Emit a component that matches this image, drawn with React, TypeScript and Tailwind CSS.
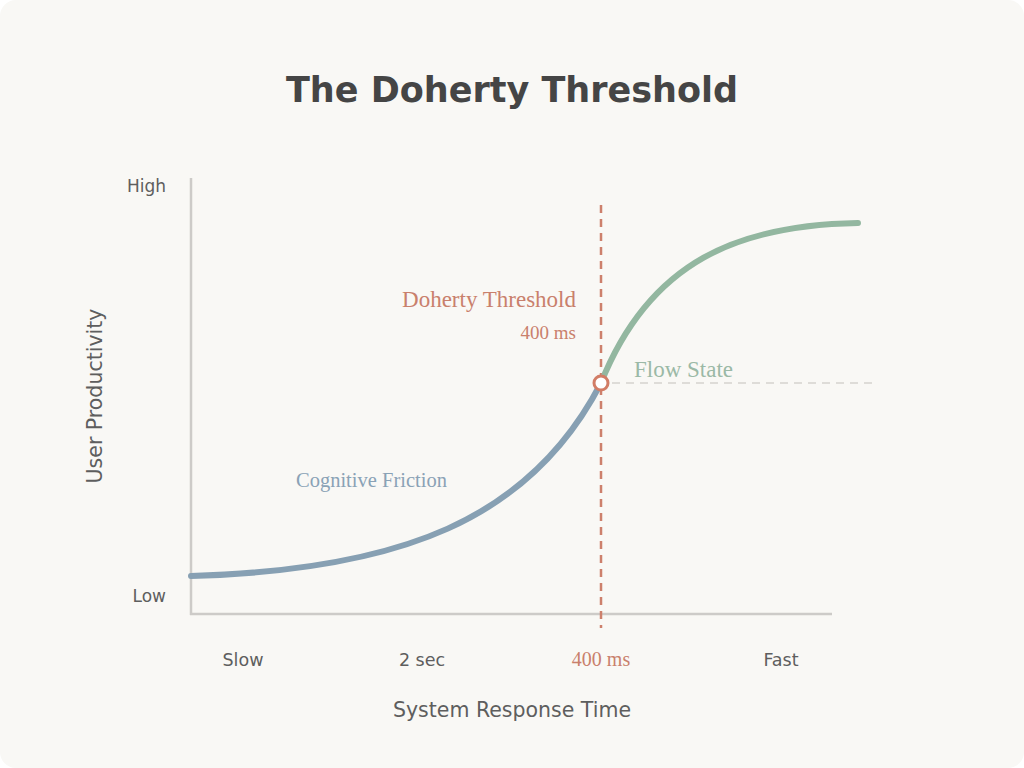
const sans = "'DejaVu Sans', 'Liberation Sans', sans-serif";
const serif = "'Liberation Serif', 'Times New Roman', serif";

function Chart() {
    return (
        <svg className="block" width="1024" height="656" viewBox="0 112 1024 656">
            {/* axes */}
            <line x1="191" y1="178" x2="191" y2="615" stroke="#cdcbc8" strokeWidth="2.5" />
            <line x1="190" y1="614" x2="832" y2="614" stroke="#cdcbc8" strokeWidth="2.5" />

            {/* threshold guides */}
            <line x1="601" y1="205" x2="601" y2="628" stroke="#cd806c" strokeWidth="2.5" strokeDasharray="8 6" />
            <line x1="612" y1="383" x2="874" y2="383" stroke="#dedcd8" strokeWidth="2" strokeDasharray="8 6" />

            {/* curves */}
            <path d="M191,576 C400,570 530,520 601,383" fill="none" stroke="#87a0b3" strokeWidth="6" strokeLinecap="round" />
            <path d="M601,383 C650,260 740,225 858,223" fill="none" stroke="#93b7a0" strokeWidth="6" strokeLinecap="round" />
            <circle cx="601" cy="383" r="7" fill="#ffffff" stroke="#d27d66" strokeWidth="3" />

            {/* y labels */}
            <text x="166" y="192" textAnchor="end" fontFamily={sans} fontSize="17" fill="#5e5e5e">High</text>
            <text x="166" y="602" textAnchor="end" fontFamily={sans} fontSize="17" fill="#5e5e5e">Low</text>
            <text transform="translate(102 396) rotate(-90)" textAnchor="middle" fontFamily={sans} fontSize="20.5" fill="#5e5e5e">User Productivity</text>

            {/* x labels */}
            <text x="243" y="666" textAnchor="middle" fontFamily={sans} fontSize="17.5" fill="#5e5e5e">Slow</text>
            <text x="422" y="666" textAnchor="middle" fontFamily={sans} fontSize="17.5" fill="#5e5e5e">2 sec</text>
            <text x="601" y="666" textAnchor="middle" fontFamily={serif} fontSize="20" fill="#c9806c">400 ms</text>
            <text x="781" y="666" textAnchor="middle" fontFamily={sans} fontSize="17.5" fill="#5e5e5e">Fast</text>
            <text x="512" y="717" textAnchor="middle" fontFamily={sans} fontSize="20.5" fill="#5e5e5e">System Response Time</text>

            {/* annotations */}
            <text x="576" y="307" textAnchor="end" fontFamily={serif} fontSize="23" fill="#c9806c">Doherty Threshold</text>
            <text x="576" y="339" textAnchor="end" fontFamily={serif} fontSize="19" fill="#c9806c">400 ms</text>
            <text x="634" y="377" fontFamily={serif} fontSize="23" fill="#9bb9a6">Flow State</text>
            <text x="296" y="487" fontFamily={serif} fontSize="20.5" fill="#8aa2b6">Cognitive Friction</text>
        </svg>
    );
}

export default function App() {
    return (
        <div className="h-[768px] w-[1024px] bg-white">
            <div className="flex h-full flex-col overflow-hidden rounded-2xl bg-[#f9f8f5]">
                <h1 className="pt-[68px] text-center font-['DejaVu_Sans',sans-serif] text-[35px] leading-[44px] font-bold text-[#454545]">
                    The Doherty Threshold
                </h1>
                <Chart />
            </div>
        </div>
    );
}
